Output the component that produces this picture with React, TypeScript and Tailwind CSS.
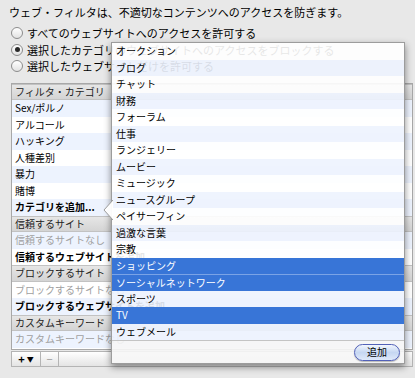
import React from 'react';

type RowKind = 'header' | 'item' | 'bold' | 'empty' | 'spacer';

interface TableRow {
  kind: RowKind;
  text: string;
}

const tableRows: TableRow[] = [
  { kind: 'header', text: 'フィルタ・カテゴリ' },
  { kind: 'item', text: 'Sex/ポルノ' },
  { kind: 'item', text: 'アルコール' },
  { kind: 'item', text: 'ハッキング' },
  { kind: 'item', text: '人種差別' },
  { kind: 'item', text: '暴力' },
  { kind: 'item', text: '賭博' },
  { kind: 'bold', text: 'カテゴリを追加...' },
  { kind: 'header', text: '信頼するサイト' },
  { kind: 'empty', text: '信頼するサイトなし' },
  { kind: 'bold', text: '信頼するウェブサイトを追加...' },
  { kind: 'header', text: 'ブロックするサイト' },
  { kind: 'empty', text: 'ブロックするサイトなし' },
  { kind: 'bold', text: 'ブロックするウェブサイトを追加...' },
  { kind: 'header', text: 'カスタムキーワード' },
  { kind: 'empty', text: 'カスタムキーワードなし' },
  { kind: 'spacer', text: '' },
];

const categories = [
  'オークション',
  'ブログ',
  'チャット',
  '財務',
  'フォーラム',
  '仕事',
  'ランジェリー',
  'ムービー',
  'ミュージック',
  'ニュースグループ',
  'ペイサーフィン',
  '過激な言葉',
  '宗教',
  'ショッピング',
  'ソーシャルネットワーク',
  'スポーツ',
  'TV',
  'ウェブメール',
];

const selected = ['ショッピング', 'ソーシャルネットワーク', 'TV'];

const Radio: React.FC<{ checked?: boolean; label: string }> = ({ checked, label }) => (
  <div className="flex items-center h-[16.5px] pl-[11px] gap-[4px] whitespace-nowrap">
    <span className="w-[12px] h-[12px] rounded-full border border-[#8c8c8c] bg-gradient-to-b from-white to-[#e2e2e2] flex items-center justify-center shrink-0">
      {checked && <span className="w-[5px] h-[5px] rounded-full bg-[#2a2a2a]" />}
    </span>
    <span>{label}</span>
  </div>
);

const App: React.FC = () => {
  return (
    <div className="relative w-[415px] h-[378px] overflow-hidden bg-[#e8e8e8] text-black font-['Noto_Sans_CJK_JP',sans-serif]">
      <div className="pt-[5px] pl-[9px] text-[11px] leading-[14px] whitespace-nowrap">
        ウェブ・フィルタは、不適切なコンテンツへのアクセスを防ぎます。
      </div>

      <div className="mt-[6px] text-[11px] leading-[14px]">
        <Radio label="すべてのウェブサイトへのアクセスを許可する" />
        <Radio checked label="選択したカテゴリのウェブサイトへのアクセスをブロックする" />
        <Radio label="選択したウェブサイトだけを許可する" />
      </div>

      {/* category table */}
      <div className="mt-[8px] ml-[11px] w-[402px] border border-[#a8a8a8] bg-white text-[10px] leading-[12px]">
        {tableRows.map((row, i) => {
          if (row.kind === 'spacer') return <div key={i} className="h-[1.5px] bg-white" />;
          if (row.kind === 'header') {
            return (
              <div
                key={i}
                className="h-[16.5px] flex items-center pl-[3px] bg-gradient-to-b from-[#e6e6e6] to-[#d4d4d4] border-y border-[#c2c2c2] text-[#222] whitespace-nowrap"
              >
                {row.text}
              </div>
            );
          }
          return (
            <div
              key={i}
              className={`h-[16.5px] flex items-center pl-[3px] whitespace-nowrap ${
                i % 2 === 1 ? 'bg-[#edf3fe]' : 'bg-white'
              } ${row.kind === 'bold' ? 'font-bold' : ''} ${row.kind === 'empty' ? 'text-[#a0a0a0]' : ''}`}
            >
              {row.text}
            </div>
          );
        })}
      </div>

      {/* +/- bar */}
      <div className="mt-[1px] ml-[11px] w-[402px] h-[16px] flex bg-gradient-to-b from-white to-[#e4e4e4] border border-[#b4b4b4] text-[11px] leading-none">
        <div className="w-[29px] flex items-center justify-center gap-[2px] border-r border-[#b4b4b4] font-bold">
          <span>+</span>
          <span className="text-[7px]">▼</span>
        </div>
        <div className="w-[18px] flex items-center justify-center border-r border-[#b4b4b4] text-[#9a9a9a]">
          −
        </div>
      </div>

      {/* category picker popover */}
      <div className="absolute left-[111px] top-[42px] w-[294px] border border-[#9c9c9c] shadow-[0_3px_7px_rgba(0,0,0,0.45)] text-[10px] leading-[12px]">
        <svg className="absolute left-[-9px] top-[157px]" width="10" height="20" viewBox="0 0 10 20">
          <polygon points="10,0 1,10 10,20" fill="rgba(255,255,255,0.95)" />
          <polyline points="10,0 1,10 10,20" fill="none" stroke="#9c9c9c" strokeWidth="1" />
        </svg>
        {categories.map((c, i) => {
          const isSel = selected.includes(c);
          const prevSel = i > 0 && selected.includes(categories[i - 1]);
          return (
            <div
              key={c}
              className={`h-[16.5px] flex items-center pl-[4px] whitespace-nowrap ${
                isSel
                  ? `bg-[#3875d7] text-white ${prevSel ? 'border-t border-[#7aa3e6]' : ''}`
                  : i % 2 === 1
                  ? 'bg-[#edf3fe]/90'
                  : 'bg-white/90'
              }`}
            >
              {c}
            </div>
          );
        })}
        <div className="h-[23px] flex items-center justify-end pr-[4px] bg-[#f6f6f6]/90 border-t border-[#c4c4c4]">
          <button className="w-[46px] h-[17px] rounded-full border border-[#5261b8] bg-gradient-to-b from-[#f2f6fd] via-[#c6d7f2] to-[#dfe9fa] text-[10px] leading-none text-black shadow-[0_1px_1px_rgba(0,0,0,0.25)]">
            追加
          </button>
        </div>
      </div>
    </div>
  );
};

export default App;
